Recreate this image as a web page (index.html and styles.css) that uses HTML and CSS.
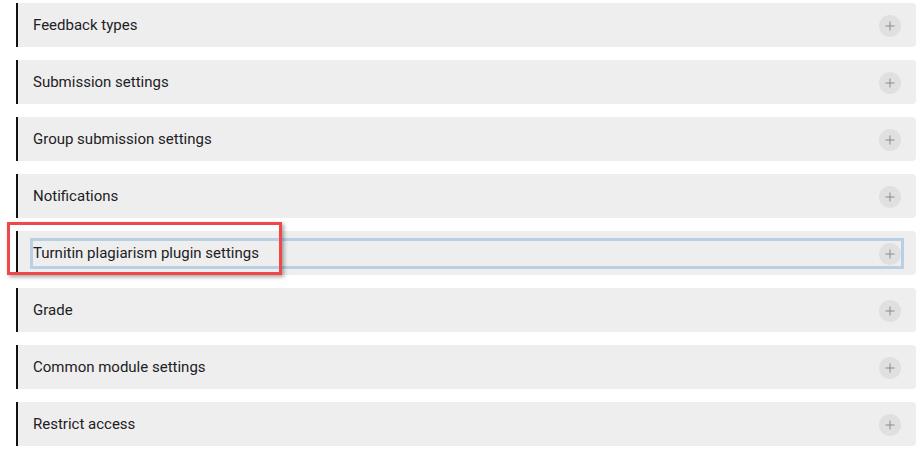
FILE: index.html
```html
<!DOCTYPE html>
<html lang="en">
<head>
<meta charset="utf-8">
<title>Settings</title>
<link rel="stylesheet" href="styles.css">
</head>
<body>
<div class="sections">
  <div class="section"><div class="header"><span class="title">Feedback types</span><span class="toggle"></span></div></div>
  <div class="section"><div class="header"><span class="title">Submission settings</span><span class="toggle"></span></div></div>
  <div class="section"><div class="header"><span class="title">Group submission settings</span><span class="toggle"></span></div></div>
  <div class="section"><div class="header"><span class="title">Notifications</span><span class="toggle"></span></div></div>
  <div class="section highlighted"><div class="header focused"><span class="title">Turnitin plagiarism plugin settings</span><span class="toggle"></span></div><div class="callout"></div></div>
  <div class="section"><div class="header"><span class="title">Grade</span><span class="toggle"></span></div></div>
  <div class="section"><div class="header"><span class="title">Common module settings</span><span class="toggle"></span></div></div>
  <div class="section"><div class="header"><span class="title">Restrict access</span><span class="toggle"></span></div></div>
</div>
</body>
</html>
```
FILE: styles.css
```css
html, body { margin: 0; background: #fff; }
body {
  font-family: Roboto, "Liberation Sans", sans-serif;
  color: #1d2125;
  padding: 3px 6px 0 16px;
}
.sections { display: flex; flex-direction: column; gap: 13px; }
.section {
  position: relative;
  background: #eeeeee;
  border-left: 2px solid #111;
  border-radius: 0 4px 4px 0;
  padding: 10px 15px 9px 15px;
}
.header {
  display: flex;
  align-items: center;
  justify-content: space-between;
  height: 25px;
}
.title { font-size: 15px; line-height: 20px; margin-bottom: 2px; }
.toggle {
  width: 22px; height: 22px;
  border-radius: 50%;
  background: #e0e0e0;
  position: relative;
}
.toggle::before, .toggle::after {
  content: "";
  position: absolute;
  background: #8a8a8a;
  left: 50%; top: 50%;
}
.toggle::before { width: 9px; height: 1px; transform: translate(-50%, -50%); }
.toggle::after { width: 1px; height: 9px; transform: translate(-50%, -50%); }
.focused { outline: 3px solid #b9d0e4; }
.callout {
  position: absolute;
  left: -11px; top: -9px;
  width: 269px; height: 47px;
  border: 3px solid #f04848;
  box-shadow: 2px 2px 4px rgba(0,0,0,0.35);
  pointer-events: none;
}
```
